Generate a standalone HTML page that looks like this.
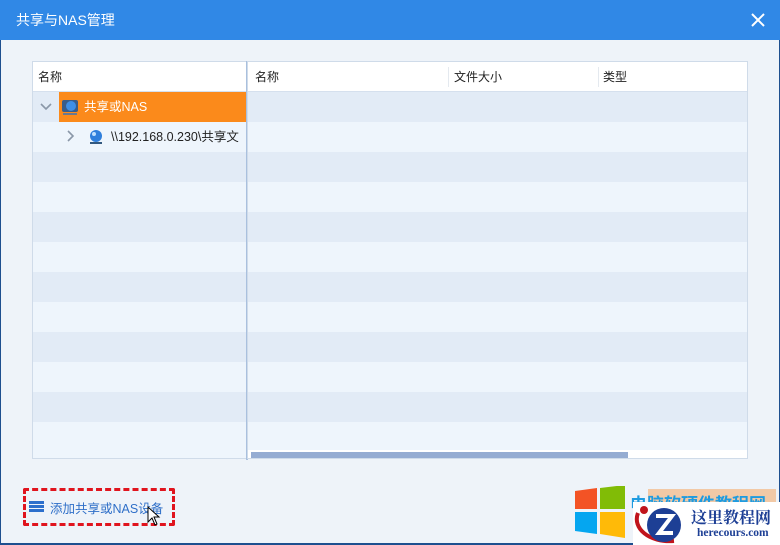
<!DOCTYPE html>
<html><head><meta charset="utf-8"><style>
*{margin:0;padding:0;box-sizing:border-box}
body{width:780px;height:545px;overflow:hidden;background:#eef3f9;position:relative;font-family:"Liberation Sans","Noto Sans CJK SC",sans-serif;font-size:12px;color:#222}
.win{position:absolute;left:0;top:0;width:780px;height:545px;background:#eef3f9;box-shadow:inset 1px 0 #1d4f8f,inset -1px 0 #1d4f8f,inset 0 -2px #1d4f8f}
.title{position:absolute;left:0;top:0;width:780px;height:40px;background:#3088e6;color:#fff;font-size:14px;line-height:40px;padding-left:16px}
.close{position:absolute;right:12px;top:10px;width:20px;height:20px}
.panel{position:absolute;top:62px;height:398px;background:#eef5fc;border:1px solid #cfdbe9;overflow:hidden}
.hdr{position:absolute;left:0;top:0;right:0;height:30px;background:#fff;border-bottom:1px solid #d5e0ee;line-height:30px}
.row{position:absolute;left:0;right:0;height:30px}
.a{background:#e2ebf6}
.b{background:#eef5fc}
</style></head><body>
<div class="win">
<div class="title">共享与NAS管理
<svg class="close" viewBox="0 0 20 20"><path d="M4 4L16 16M16 4L4 16" stroke="#fff" stroke-width="2"/></svg></div>

<div class="panel" style="left:32px;width:215px;top:61px">
 <div class="hdr"><span style="padding-left:5px">名称</span></div>
 <div class="row a" style="top:30px"></div>
 <div class="row b" style="top:60px"></div>
 <div class="row a" style="top:90px"></div><div class="row b" style="top:120px"></div>
 <div class="row a" style="top:150px"></div><div class="row b" style="top:180px"></div>
 <div class="row a" style="top:210px"></div><div class="row b" style="top:240px"></div>
 <div class="row a" style="top:270px"></div><div class="row b" style="top:300px"></div>
 <div class="row a" style="top:330px"></div><div class="row b" style="top:360px"></div>
 <svg style="position:absolute;left:7px;top:40px" width="12" height="10"><path d="M1 2L6 7L11 2" stroke="#8a97a8" stroke-width="1.6" fill="none"/></svg>
 <div style="position:absolute;left:26px;top:30px;width:187px;height:30px;background:#fb8a1b;color:#fff;line-height:30px;font-size:12.5px;padding-left:25px">共享或NAS</div>
 <svg style="position:absolute;left:28px;top:36px" width="18" height="18"><rect x="1" y="2" width="16" height="12" rx="2" fill="#3a5d8a"/><circle cx="10" cy="8" r="5" fill="#3f8fe6"/><rect x="2" y="15" width="14" height="2" fill="#6a7890"/></svg>
 <svg style="position:absolute;left:34px;top:68px" width="8" height="12"><path d="M1 1L6 6L1 11" stroke="#8a97a8" stroke-width="1.6" fill="none"/></svg>
 <svg style="position:absolute;left:55px;top:67px" width="16" height="16"><circle cx="8" cy="7" r="6" fill="#2f7fdc"/><circle cx="6" cy="5" r="2" fill="#bfe0ff"/><rect x="2" y="13" width="12" height="2" fill="#32587f"/></svg>
 <div style="position:absolute;left:78px;top:60px;line-height:30px;font-size:12.5px;white-space:nowrap">\\192.168.0.230\共享文</div>
</div>
<div style="position:absolute;left:246px;top:61px;width:2px;height:399px;background:#a9c0de"></div>

<div class="panel" style="left:247px;width:501px;top:61px">
 <div class="hdr"><span style="position:absolute;left:7px">名称</span><span style="position:absolute;left:200px;top:5px;width:1px;height:20px;background:#e4e9ef"></span><span style="position:absolute;left:206px">文件大小</span><span style="position:absolute;left:350px;top:5px;width:1px;height:20px;background:#e4e9ef"></span><span style="position:absolute;left:355px">类型</span></div>
 <div class="row a" style="top:30px"></div><div class="row b" style="top:60px"></div>
 <div class="row a" style="top:90px"></div><div class="row b" style="top:120px"></div>
 <div class="row a" style="top:150px"></div><div class="row b" style="top:180px"></div>
 <div class="row a" style="top:210px"></div><div class="row b" style="top:240px"></div>
 <div class="row a" style="top:270px"></div><div class="row b" style="top:300px"></div>
 <div class="row a" style="top:330px"></div><div class="row b" style="top:360px"></div>
 <div style="position:absolute;left:0;top:388px;width:501px;height:10px;background:#fff"></div>
 <div style="position:absolute;left:3px;top:390px;width:377px;height:6px;background:#95acd2"></div>
</div>

<div style="position:absolute;left:23px;top:488px;width:152px;height:38px;border:3px dashed #e0141e;border-radius:2px"></div>
<svg style="position:absolute;left:29px;top:501px" width="15" height="11"><rect y="0" width="15" height="3" fill="#2c6fcc"/><rect y="4" width="15" height="3" fill="#2c6fcc"/><rect y="8" width="15" height="3" fill="#2c6fcc"/></svg>
<div style="position:absolute;left:50px;top:498px;color:#2f6fc8;font-size:12.5px">添加共享或NAS设备</div>
<svg style="position:absolute;left:147px;top:506px" width="14" height="20"><path d="M1 1L1 16L5 12L8 19L10 18L7 11L12 11Z" fill="#fff" stroke="#000"/></svg>

<svg style="position:absolute;left:575px;top:486px" width="52" height="52"><path d="M0 5L22 2V23H0Z" fill="#f35325"/><path d="M25 2L50 -1V23H25Z" fill="#81bc06"/><path d="M0 26H22V48L0 45Z" fill="#05a6f0"/><path d="M25 26H50V52L25 48Z" fill="#ffba08"/></svg>
<div style="position:absolute;left:648px;top:489px;width:128px;height:20px;background:#f2c9a6"></div>
<div style="position:absolute;left:630px;top:490px;color:#1e9be0;font-size:17px;font-weight:bold;white-space:nowrap">电脑软硬件教程网</div>
<div style="position:absolute;left:633px;top:502px;width:147px;height:43px;background:#fff"></div>
<svg style="position:absolute;left:634px;top:503px" width="52" height="42"><path d="M4 10C-2 25 15 40 40 38" stroke="#c0141c" stroke-width="4" fill="none"/><circle cx="30" cy="22" r="17" fill="#1d3f95"/><path d="M22 13H38L25 30H39" stroke="#fff" stroke-width="4" fill="none"/><circle cx="10" cy="7" r="4" fill="#c0141c"/></svg>
<div style="position:absolute;left:691px;top:505px;color:#1d3f95;font-size:16px;font-weight:bold;font-family:'Liberation Serif','Noto Serif CJK SC',serif;white-space:nowrap">这里教程网</div>
<div style="position:absolute;left:697px;top:527px;color:#1d3f95;font-size:11.5px;font-weight:bold;font-family:'Liberation Serif',serif">herecours.com</div>
</div>
</body></html>
